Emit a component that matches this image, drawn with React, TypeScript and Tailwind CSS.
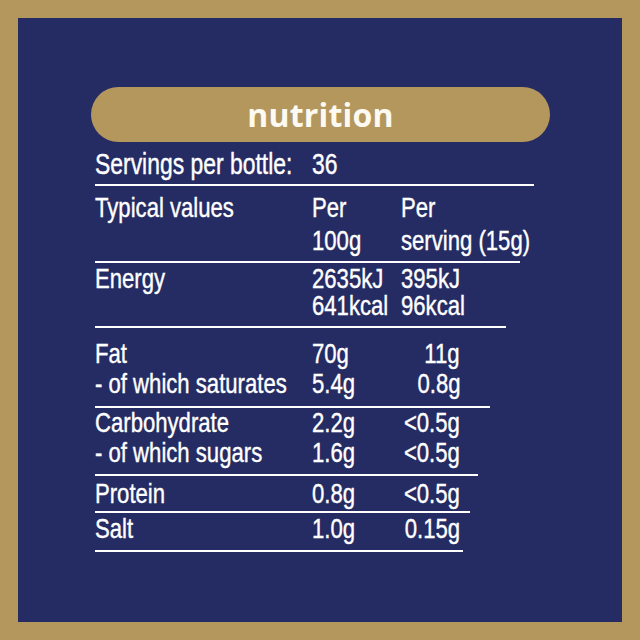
const cond = "font-['Liberation_Sans','Arial',sans-serif] [-webkit-text-stroke:0.4px_white]";

// Liberation Sans squeezed horizontally to read like the condensed face on the label
function T({ children, right = false }: { children: React.ReactNode; right?: boolean }) {
  return (
    <span
      className={`inline-block whitespace-nowrap scale-x-[0.79] ${right ? "origin-right" : "origin-left"}`}
    >
      {children}
    </span>
  );
}

type Row = { label: string; per100: string; perServing: string };

function Section({
  width,
  className,
  rows,
}: {
  width: string;
  className: string;
  rows: Row[];
}) {
  return (
    <div className={`border-b-2 border-white ${width} ${className}`}>
      {rows.map((r) => (
        <div key={r.label} className="grid grid-cols-[217px_89px_1fr] leading-[30px]">
          <span>
            <T>{r.label}</T>
          </span>
          <span>
            <T>{r.per100}</T>
          </span>
          <span className="flex w-[59px] justify-end">
            <T right>{r.perServing}</T>
          </span>
        </div>
      ))}
    </div>
  );
}

export default function App() {
  return (
    <div className="h-[640px] w-[640px] bg-[#b4975d] p-[18px]">
      <div className="h-full w-full bg-[#252c63] pl-[73px] pt-[69px] text-white">
        <div className="flex h-[55px] w-[459px] items-center justify-center rounded-full bg-[#b4975d]">
          <span className="font-['Open_Sans',sans-serif] text-[32px] font-bold leading-none tracking-[0.2px] text-[#fdfaf2]">
            nutrition
          </span>
        </div>

        <div className={`ml-[4px] text-[28px] ${cond}`}>
          {/* Servings */}
          <div className="w-[439px] border-b-2 border-white pb-[5px] pt-[7px]">
            <div className="grid grid-cols-[217px_1fr] text-[29px] leading-[30px]">
              <span>
                <T>Servings per bottle:</T>
              </span>
              <span>
                <T>36</T>
              </span>
            </div>
          </div>

          {/* Header */}
          <div className="w-[425px] border-b-2 border-white pb-[4px] pt-[5px]">
            <div className="grid grid-cols-[217px_89px_1fr] leading-[33px]">
              <span>
                <T>Typical values</T>
              </span>
              <span>
                <T>
                  Per
                  <br />
                  100g
                </T>
              </span>
              <span>
                <T>
                  Per
                  <br />
                  serving (15g)
                </T>
              </span>
            </div>
          </div>

          {/* Energy */}
          <div className="w-[411px] border-b-2 border-white pb-[7px] pt-[2px]">
            <div className="grid grid-cols-[217px_89px_1fr] leading-[27px]">
              <span>
                <T>Energy</T>
              </span>
              <span>
                <T>
                  2635kJ
                  <br />
                  641kcal
                </T>
              </span>
              <span>
                <T>
                  395kJ
                  <br />
                  96kcal
                </T>
              </span>
            </div>
          </div>

          <Section
            width="w-[395px]"
            className="pb-[7px] pt-[11px]"
            rows={[
              { label: "Fat", per100: "70g", perServing: "11g" },
              { label: "- of which saturates", per100: "5.4g", perServing: "0.8g" },
            ]}
          />
          <Section
            width="w-[383px]"
            className="pb-[6px] pt-0"
            rows={[
              { label: "Carbohydrate", per100: "2.2g", perServing: "<0.5g" },
              { label: "- of which sugars", per100: "1.6g", perServing: "<0.5g" },
            ]}
          />
          <Section
            width="w-[375px]"
            className="pb-[2px] pt-[3px]"
            rows={[{ label: "Protein", per100: "0.8g", perServing: "<0.5g" }]}
          />
          <Section
            width="w-[368px]"
            className="pb-[6px] pt-[1px]"
            rows={[{ label: "Salt", per100: "1.0g", perServing: "0.15g" }]}
          />
        </div>
      </div>
    </div>
  );
}
